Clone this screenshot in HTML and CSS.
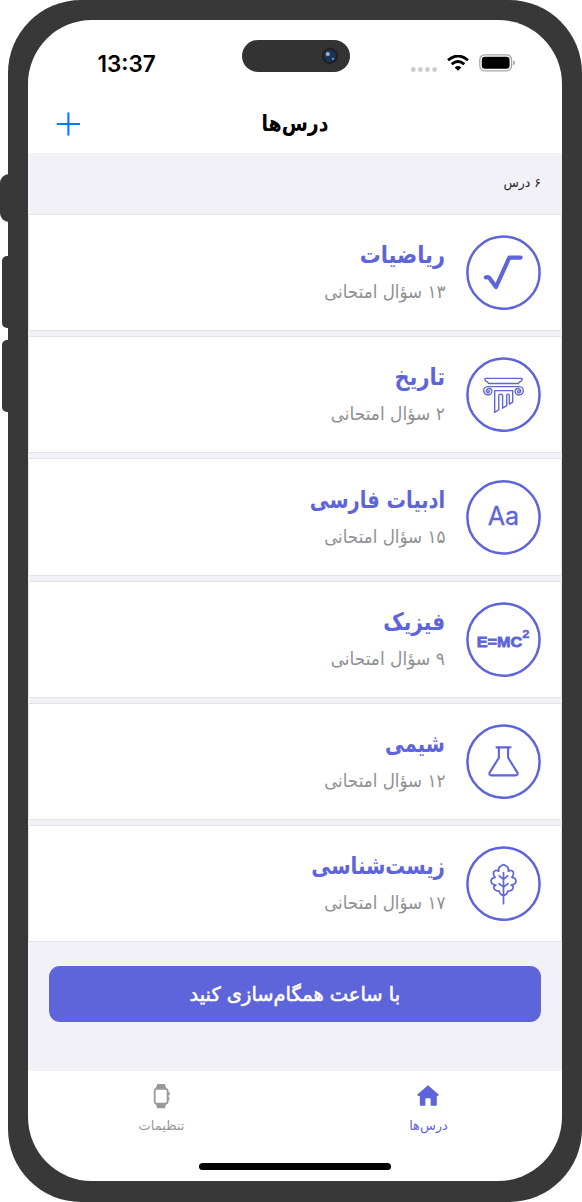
FILE: index.html
```html
<!DOCTYPE html>
<html lang="fa" dir="rtl">
<head>
<meta charset="utf-8">
<title>درس‌ها</title>
<link rel="stylesheet" href="styles.css">
</head>
<body>
<div class="phone">
  <i class="side-key key-mute"></i><i class="side-key key-up"></i><i class="side-key key-down"></i>
  <main class="screen">
    <div class="island"><svg width="16" height="16" viewBox="0 0 16 16"><circle cx="8" cy="8" r="8" fill="#1f1f1f"/><circle cx="8" cy="8" r="6.2" fill="#1b3257"/><circle cx="5.8" cy="6" r="2.2" fill="#7f95ba"/><circle cx="5.8" cy="6" r="1" fill="#b9c6dc"/><circle cx="11" cy="10.8" r="1.1" fill="#7fa3d0"/></svg></div>
    <header class="status" dir="ltr">
      <span class="clock">13:37</span>
      <div class="indicators">
        <svg class="signal" width="27" height="6" viewBox="0 0 27 6" fill="#ccc"><circle cx="2.3" cy="2.5" r="2.4"/><circle cx="9.4" cy="2.5" r="2.4"/><circle cx="16.5" cy="2.5" r="2.4"/><circle cx="23.6" cy="2.5" r="2.4"/></svg>
        <svg class="wifi" width="22" height="16" viewBox="0 0 22 16"><path d="M1 5.3Q11-3.3 21 5.3M4.7 9.2Q11 3.8 17.3 9.2" fill="none" stroke="#000" stroke-width="2.8"/><path d="M7.7 12.4Q11 9.5 14.3 12.4L11 15.8Z"/></svg>
        <svg class="battery" width="37" height="18" viewBox="0 0 37 18"><rect x=".8" y=".8" width="31.8" height="16" rx="5" fill="none" stroke="#a6a6a6" stroke-width="1.3"/><rect x="2.8" y="2.8" width="27.8" height="12" rx="3.2"/><path d="M34.2 6.2Q36.2 7 36.2 8.8T34.2 11.4Z" fill="#a6a6a6"/></svg>
      </div>
    </header>
    <nav class="titlebar">
      <h1>درس‌ها</h1>
      <svg class="add" width="24" height="24" viewBox="0 0 24 24"><path d="M12.4 1.2V22.8M1.6 12H23.2" stroke="#007aff" stroke-width="2.1" stroke-linecap="round"/></svg>
    </nav>
    <section class="content">
      <p class="count">۶ درس</p>
      <div class="lessons">
        <article class="card math">
          <svg class="badge" viewBox="0 -.2 75 75"><circle cx="37.5" cy="37.5" r="36.1"/><path class="thick" d="M19.8 42.2Q22.8 41.2 24.5 44.2L30 51.8L43.3 22.4H54.6"/></svg>
          <div class="info"><h2>ریاضیات</h2><p>۱۳ سؤال امتحانی</p></div>
        </article>
        <article class="card history">
          <svg class="badge" viewBox="0 -.2 75 75"><circle cx="37.5" cy="37.5" r="36.1"/><path class="fine" d="M19 21.2H56Q56.3 23.9 53.6 24.7L52.3 26.3H22.7L21.4 24.7Q18.7 23.9 19 21.2ZM22 29.4H53Q57.6 29.6 57.3 34Q56.4 38 52.5 37.8Q48.7 37 49.2 33.2Q50.5 30.4 53.5 31.7Q55.7 33.5 53.9 35.4Q51.8 36.3 51.6 34.3Q51.9 33 53.3 33.8M22 29.4Q17.4 29.6 17.7 34Q18.6 38 22.5 37.8Q26.3 37 25.8 33.2Q24.5 30.4 21.5 31.7Q19.3 33.5 21.1 35.4Q23.2 36.3 23.4 34.3Q23.1 33 21.7 33.8M28.7 33.4H46.7V45L43.3 47V38Q42 35.8 40.7 38V48.5L36.6 51V38Q34.7 35.8 32.8 38V52.6L28.7 55.2Z"/></svg>
          <div class="info"><h2>تاریخ</h2><p>۲ سؤال امتحانی</p></div>
        </article>
        <article class="card literature">
          <svg class="badge" viewBox="0 .1 75 75"><circle cx="37.5" cy="37.5" r="36.1"/><text class="aa" x="37.5" y="45.2" textLength="31.5" lengthAdjust="spacingAndGlyphs">Aa</text></svg>
          <div class="info"><h2>ادبیات فارسی</h2><p>۱۵ سؤال امتحانی</p></div>
        </article>
        <article class="card physics">
          <svg class="badge" viewBox="0 -.1 75 75"><circle cx="37.5" cy="37.5" r="36.1"/><text class="emc" x="33.5" y="45" textLength="45.4" lengthAdjust="spacingAndGlyphs">E=MC</text><text class="sup" x="59.9" y="36" textLength="7.2" lengthAdjust="spacingAndGlyphs">2</text></svg>
          <div class="info"><h2>فیزیک</h2><p>۹ سؤال امتحانی</p></div>
        </article>
        <article class="card chemistry">
          <svg class="badge" viewBox="0 -.2 75 75"><circle cx="37.5" cy="37.5" r="36.1"/><path class="medium" d="M30.5 23.2H44.5M32.9 23.2V33.5L23.6 48.4Q22.7 51.2 25.5 51.2H49.5Q52.3 51.2 51.4 48.4L42.1 33.5V23.2"/></svg>
          <div class="info"><h2>شیمی</h2><p>۱۲ سؤال امتحانی</p></div>
        </article>
        <article class="card biology">
          <svg class="badge" viewBox="0 -.2 75 75"><circle cx="37.5" cy="37.5" r="36.1"/><path class="leaf" d="M37.5 26.5V57.5M33.3 29.7L37.5 33.2L41.7 29.7M33 37.5L37.5 41L42 37.5M37.5 49.3Q34 49 33.2 45Q27.5 44.8 27.8 40.2Q29 39.8 29.8 38.8Q25 38.3 25 34.5Q25.5 31.7 29.1 31.2Q26.8 28.5 27.8 25.6Q30 23.3 32.8 25Q31.8 20.8 35.2 19.8Q37.5 17 39.8 19.8Q43.2 20.8 42.2 25Q45 23.3 47.2 25.6Q48.2 28.5 45.9 31.2Q49.5 31.7 50 34.5Q50 38.3 45.2 38.8Q46 39.8 47.2 40.2Q47.5 44.8 41.8 45Q41 49 37.5 49.3"/></svg>
          <div class="info"><h2>زیست‌شناسی</h2><p>۱۷ سؤال امتحانی</p></div>
        </article>
      </div>
      <button class="sync"><span>با ساعت همگام‌سازی کنید</span></button>
    </section>
    <footer class="tabs">
      <a class="tab active"><svg width="24" height="26" viewBox="0 0 24 26"><path fill="#5e64d9" d="M11 2.2L21.4 11.2Q22.5 12.8 20.3 13H19.8V21.8Q19.8 22.7 18.8 22.7H13.6V16.2Q13.6 15.2 12.6 15.2H9.4Q8.4 15.2 8.4 16.2V22.7H3.8Q2.8 22.7 2.8 21.8V13H1.7Q-.5 12.8 .6 11.2Z"/></svg><span>درس‌ها</span></a>
      <a class="tab"><svg width="24" height="26" viewBox="1 0 24 26"><path fill="#999" d="M8.2 1H15.8L17.2 5.2H6.8ZM6.8 21H17.2L15.8 25.2H8.2ZM19 9.3H20.8V12.3H19ZM19 14H20.3V17.5H19Z"/><rect x="5.7" y="5.8" width="12.9" height="14.8" rx="2" fill="#fff" stroke="#999" stroke-width="1.8"/></svg><span>تنظیمات</span></a>
    </footer>
    <div class="home-indicator"></div>
  </main>
</div>
</body>
</html>
```
FILE: styles.css
```css
* { box-sizing: border-box; }
body, h1, h2, p { margin: 0; }
body { background: #fff; font-family: "DejaVu Sans", sans-serif; }
svg { display: block; flex: none; }
.phone { position: relative; width: 574px; height: 1202px; margin-right: 0; padding: 20px 20px 21px; border-radius: 73px; background: #383838; }
.side-key { position: absolute; z-index: -1; background: #383838; }
.key-mute { left: -8px; top: 174px; width: 20px; height: 48px; border-radius: 9px; }
.key-up, .key-down { left: -6px; width: 20px; height: 72px; border-radius: 5px; }
.key-up { top: 256px; }
.key-down { top: 340px; }
.screen { position: relative; display: flex; flex-direction: column; height: 1161px; overflow: hidden; border-radius: 64px; background: #fff; }
.island { position: absolute; left: 214px; top: 20px; width: 108px; height: 32px; padding: 8px 12px; border-radius: 16px; background: #333; }
.status { display: flex; justify-content: space-between; height: 73px; padding: 27px 46px 0 69.5px; }
.clock { font: 600 22.5px/33px Inter, sans-serif; }
.indicators { display: flex; padding-top: 7px; }
.signal { margin: 13px 9px 0 0; }
.wifi { margin: 1px 10px 0 0; }
.titlebar { display: grid; grid-template-columns: 1fr auto 1fr; align-items: center; height: 60px; padding: 0 28px; }
h1 { grid-column: 2; padding-top: 2px; font-size: 22px; line-height: 38px; transform: scaleX(.86); }
.add { justify-self: end; margin-top: 2px; }
.content { height: 918px; background: #f2f1f7; }
.count { height: 61px; padding: 18px 21px 0; font-size: 12.5px; line-height: 24px; color: #222; }
.lessons { display: flex; flex-direction: column; gap: 5px; }
.card { display: flex; gap: 21px; height: 117.2px; padding: 20.3px 20px 0; border: 1px solid #e4e4e6; background: #fff; }
.badge { width: 75px; height: 75px; fill: none; stroke: #5e64d9; stroke-linecap: round; stroke-linejoin: round; stroke-width: 2.5; }
.thick { stroke-width: 4.2; }
.fine { stroke-width: 1.35; }
.medium { stroke-width: 2.1; }
.leaf { stroke-width: 1.7; }
.badge text { direction: ltr; fill: #5e64d9; stroke: none; text-anchor: middle; }
.aa { font: 400 25.5px Inter, sans-serif; }
.badge .aa { stroke: #5e64d9; stroke-width: .3; }
.badge .emc { font: bold 15.5px "Liberation Sans", sans-serif; stroke: #5e64d9; stroke-width: .8; }
.badge .sup { font: bold 11.5px "Liberation Sans", sans-serif; stroke: #5e64d9; stroke-width: .4; }
.info { padding-top: 1px; }
.info h2, .info p { width: max-content; transform-origin: right; }
.info h2 { font-size: 24px; line-height: 38px; color: #5e64d9; }
.info p { font-size: 18px; line-height: 36px; color: #8f8f93; transform: scaleX(.93); }
.math h2 { transform: scaleX(.87); }
.history h2 { transform: scaleX(.87); }
.literature h2 { transform: scaleX(.81); }
.physics h2 { transform: scaleX(.835); }
.chemistry h2 { transform: scaleX(.81); }
.biology h2 { transform: scaleX(.82); }
.history p, .physics p { transform: scaleX(.945); }
.sync { display: block; width: 492px; height: 56px; margin: 24px 21px 0; padding: 0; border: 0; border-radius: 11px; background: #5e64d9; color: #fff; font: 19.5px/56px "DejaVu Sans", sans-serif; -webkit-text-stroke: .6px #fff; }
.sync span { display: inline-block; transform: translateY(1px) scaleX(.995); }
.tabs { display: flex; }
.tab { flex: 1; display: flex; flex-direction: column; align-items: center; padding-top: 12px; color: #999; font-size: 13px; line-height: 34px; }
.active { color: #5e64d9; }
.home-indicator { width: 192px; height: 7px; margin: 20px auto 0; border-radius: 4px; background: #000; }
```
